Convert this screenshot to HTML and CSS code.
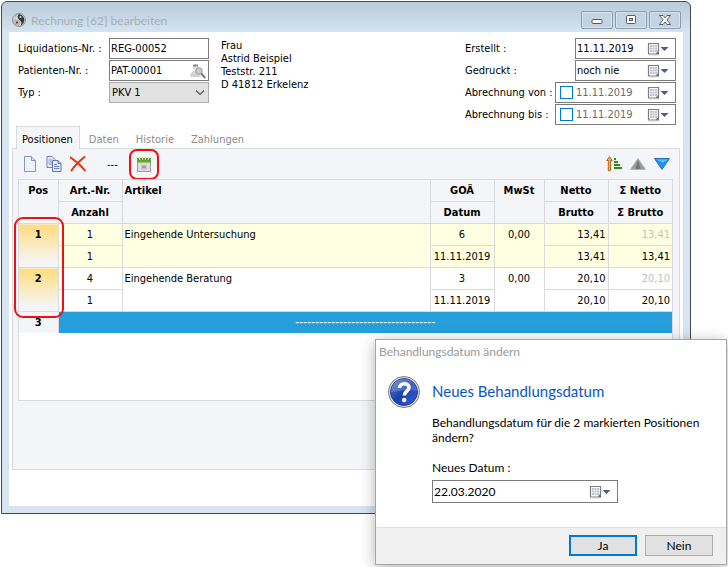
FILE: index.html
```html
<!DOCTYPE html>
<html lang="de">
<head>
    <meta charset="UTF-8">
    <meta name="viewport" content="width=device-width, initial-scale=1.0">
    <title>Rechnung bearbeiten</title>
    <link rel="stylesheet" href="styles.css">
</head>
<body>

<!-- Symbole, die mehrfach vorkommen -->
<svg width="0" height="0" class="symbols">
    <symbol id="picker" viewBox="0 0 22 14">
        <path d="M1.500 1.500h10v8l-2.500 2.500H1.500z" fill="#fbfafa" stroke="#857a7c" stroke-width="1.200"/>
        <path d="M3 3h7v7H3z" fill="#b4bfcd"/>
        <path d="M3 5.300h7M3 7.700h7M5.300 3v7M7.700 3v7" stroke="#eef1f6" stroke-width=".8"/>
        <path d="M12 9.500v3H9z" fill="#6f6769"/>
        <path d="M2 13h9" stroke="#cfc8c8" stroke-width=".8"/>
        <path d="M13.500 5h8l-4 4z" fill="#44608f"/>
    </symbol>
</svg>

<main class="window">
    <header class="titlebar">
        <svg class="logo" width="14" height="14" viewBox="0 0 14 14">
            <circle cx="7" cy="7" r="6.500" fill="#d8d8d8" stroke="#8a8f94"/>
            <path d="M5 1a6.200 6.200 0 0 1 3 12c2-2 2-4 0-5.500S4.500 3.500 7 1z" fill="#3a3a3a"/>
            <path d="M6 1a3 3 0 0 0 0 6c3 1 3 4 1 6A6 6 0 0 1 1 8" fill="#999" opacity=".5"/>
            <circle cx="8.500" cy="4" r="1" fill="#ddd"/>
            <circle cx="5" cy="9.500" r="1" fill="#333"/>
        </svg>
        <h1>Rechnung [62] bearbeiten</h1>
        <button class="winbtn" aria-label="Minimieren">
            <svg width="12" height="10" viewBox="0 0 12 10"><rect x="1" y="4.500" width="10" height="4" rx="1" fill="#fff" stroke="#555b63"/></svg>
        </button>
        <button class="winbtn" aria-label="Maximieren">
            <svg width="12" height="10" viewBox="0 0 12 10"><rect x="1.500" y=".5" width="9" height="8" rx="1" fill="#fff" stroke="#555b63"/><rect x="4.500" y="3.500" width="3" height="2" fill="#c4d2e0" stroke="#555b63"/></svg>
        </button>
        <button class="winbtn" aria-label="Schließen">
            <svg width="12" height="10" viewBox="0 0 12 10"><path d="M.5.5h3.500l2 2.300 2-2.300h3.500L8 4.800l3.500 4.700H8L6 7 4 9.500H.5L4 4.800z" fill="#fff" stroke="#555b63"/></svg>
        </button>
    </header>

    <div class="content">
        <form class="head">
            <div class="fields">
                <label for="liqNr">Liquidations-Nr. :</label>
                <div class="box"><input type="text" id="liqNr" value="REG-00052"></div>
                <label for="patNr">Patienten-Nr. :</label>
                <div class="box">
                    <input type="text" id="patNr" value="PAT-00001">
                    <button type="button" class="plain" aria-label="Patient suchen">
                        <svg width="17" height="16" viewBox="0 0 17 16">
                            <path d="M1 14c0-4 2-5 4-6h4l3 6z" fill="#d2d2d2"/>
                            <circle cx="6.500" cy="4.500" r="3" fill="#dedede"/>
                            <path d="M4 1.500h5v2H4z" fill="#8c8c8c"/>
                            <circle cx="10" cy="8" r="3.200" fill="#ccc" stroke="#999"/>
                            <path d="M12.200 10.500l4 4.500" stroke="#777" stroke-width="2"/>
                        </svg>
                    </button>
                </div>
                <label for="typ">Typ :</label>
                <div class="combo">
                    <select id="typ"><option>PKV 1</option></select>
                    <svg width="10" height="6" viewBox="0 0 10 6"><path d="M1 .5l4 4 4-4" fill="none" stroke="#555" stroke-width="1.200"/></svg>
                </div>
            </div>

            <address>Frau<br>Astrid Beispiel<br>Teststr. 211<br>D 41812 Erkelenz</address>

            <div class="dates">
                <label for="erstellt">Erstellt :</label>
                <div class="box">
                    <input type="text" id="erstellt" value="11.11.2019">
                    <button type="button" class="plain" aria-label="Kalender"><svg width="22" height="14"><use href="#picker"/></svg></button>
                </div>
                <label for="gedruckt">Gedruckt :</label>
                <div class="box">
                    <input type="text" id="gedruckt" value="noch nie">
                    <button type="button" class="plain" aria-label="Kalender"><svg width="22" height="14"><use href="#picker"/></svg></button>
                </div>
                <label for="von">Abrechnung von :</label>
                <div class="box wide">
                    <input type="checkbox" aria-label="Abrechnung von aktiv">
                    <input type="text" class="off" id="von" value="11.11.2019">
                    <button type="button" class="plain" aria-label="Kalender"><svg width="22" height="14"><use href="#picker"/></svg></button>
                </div>
                <label for="bis">Abrechnung bis :</label>
                <div class="box wide">
                    <input type="checkbox" aria-label="Abrechnung bis aktiv">
                    <input type="text" class="off" id="bis" value="11.11.2019">
                    <button type="button" class="plain" aria-label="Kalender"><svg width="22" height="14"><use href="#picker"/></svg></button>
                </div>
            </div>
        </form>

        <nav class="tabs">
            <a href="#positionen" class="active">Positionen</a>
            <a href="#daten">Daten</a>
            <a href="#historie">Historie</a>
            <a href="#zahlungen">Zahlungen</a>
        </nav>

        <section class="panel" id="positionen">
            <div class="toolbar">
                <button class="tool" aria-label="Neu">
                    <svg width="16" height="16" viewBox="0 0 16 16"><path d="M2.500.5h7l4 4v11h-11z" fill="#eef3fc" stroke="#8295c0"/><path d="M9.500.5v4h4" fill="#cfdcf3" stroke="#8295c0"/></svg>
                </button>
                <button class="tool" aria-label="Kopieren">
                    <svg width="16" height="16" viewBox="0 0 16 16"><path d="M1 .5h5l3 3v8H1z" fill="#e6edfa" stroke="#6f84b8"/><path d="M2.500 4h4M2.500 6h4M2.500 8h4" stroke="#7f94c6"/><path d="M6.500 4.500h5.500l3 3v8H6.500z" fill="#e6edfa" stroke="#5f75ad"/><path d="M12 4.500v3h3" fill="none" stroke="#5f75ad"/><path d="M8 8.500h3M8 10.500h5.500M8 12.500h5.500" stroke="#6f88c4"/></svg>
                </button>
                <button class="tool" aria-label="Löschen">
                    <svg width="16" height="16" viewBox="0 0 16 16"><path d="M.5 1.500C5 4.500 11 9.500 15 14.500M14.500 1C9.500 5 4.500 10 1.500 14.500" fill="none" stroke="#e5330c" stroke-width="2" stroke-linecap="round"/></svg>
                </button>
                <button class="tool dashes">---</button>
                <button class="tool marked" aria-label="Behandlungsdatum ändern">
                    <svg width="14" height="15" viewBox="0 0 14 15"><path d="M.5 4h13v10.500H.5z" fill="#d9d9d9" stroke="#a0a0a0"/><path d="M0 1h14v4.500H0z" fill="#5fa82e"/><path d="M2.500 0v3M5.500 0v3M8.500 0v3M11.500 0v3" stroke="#c2e09c"/><path d="M2 7.500h10v5H2z" fill="#f4f4f4"/><path d="M2 9h10M2 11h10M4.500 7v6M7 7v6M9.500 7v6" stroke="#c4c0c0" stroke-width=".8"/><path d="M5 8.500h4v3H5z" fill="#a79c9c"/></svg>
                </button>
                <span class="spacer"></span>
                <button class="tool" aria-label="Sortieren">
                    <svg width="16" height="16" viewBox="0 0 16 16"><path d="M3.500.7L6.300 4.500H4.700v10H2.300v-10H.7z" fill="#f5b25c" stroke="#b5651a"/><path d="M8 3h2M8 6h4M8 9h6M8 12h8" stroke="#2f8a1e" stroke-width="2"/></svg>
                </button>
                <button class="tool" aria-label="Nach oben">
                    <svg width="16" height="16" viewBox="0 0 16 16"><path d="M8 2.500l7.500 11H.5z" fill="#9a9a9a" stroke="#b5b5b5"/><path d="M8 4l2.500 9h-5z" fill="#747474"/></svg>
                </button>
                <button class="tool" aria-label="Nach unten">
                    <svg width="16" height="16" viewBox="0 0 16 16"><path d="M.5 2.500h15L8 13.500z" fill="#1d94f3" stroke="#2d6fb7"/><path d="M2 3.500h12l-5 3z" fill="#62bdff"/></svg>
                </button>
            </div>

            <div class="grid">
                <table>
                    <colgroup>
                        <col class="c-pos"><col class="c-mid"><col><col class="c-mid"><col class="c-tax"><col class="c-mid"><col class="c-mid">
                    </colgroup>
                    <thead>
                        <tr><th rowspan="2">Pos</th><th>Art.-Nr.</th><th rowspan="2" class="left">Artikel</th><th>GOÄ</th><th rowspan="2">MwSt</th><th>Netto</th><th>Σ Netto</th></tr>
                        <tr><th>Anzahl</th><th>Datum</th><th>Brutto</th><th>Σ Brutto</th></tr>
                    </thead>
                    <tbody class="yellow">
                        <tr><th rowspan="2" class="sel">1</th><td>1</td><td rowspan="2" class="left">Eingehende Untersuchung</td><td>6</td><td rowspan="2">0,00</td><td class="num">13,41</td><td class="num dim">13,41</td></tr>
                        <tr><td>1</td><td>11.11.2019</td><td class="num">13,41</td><td class="num">13,41</td></tr>
                    </tbody>
                    <tbody>
                        <tr><th rowspan="2" class="sel">2</th><td>4</td><td rowspan="2" class="left">Eingehende Beratung</td><td>3</td><td rowspan="2">0,00</td><td class="num">20,10</td><td class="num dim">20,10</td></tr>
                        <tr><td>1</td><td>11.11.2019</td><td class="num">20,10</td><td class="num">20,10</td></tr>
                    </tbody>
                    <tbody>
                        <tr><th>3</th><td colspan="6" class="current">-----------------------------------</td></tr>
                    </tbody>
                </table>
                <span class="ring"></span>
            </div>
        </section>
    </div>
</main>

<div class="dialog" role="dialog" aria-labelledby="dlgTitle">
    <div class="dialog-title" id="dlgTitle">Behandlungsdatum ändern</div>
    <div class="dialog-body">
        <svg width="34" height="34" viewBox="0 0 34 34">
            <defs>
                <linearGradient id="blue" x1="0" y1="0" x2="1" y2="1">
                    <stop offset="0" stop-color="#5b86dc"/>
                    <stop offset=".5" stop-color="#1b3fae"/>
                    <stop offset="1" stop-color="#3b5fe0"/>
                </linearGradient>
            </defs>
            <circle cx="17" cy="17" r="15.500" fill="#e8e8e8" stroke="#777"/>
            <circle cx="17" cy="17" r="13.500" fill="url(#blue)" stroke="#1c3a8c"/>
            <path d="M4 17a13 13 0 0 1 26-1c-8-2-18 0-26 1z" fill="#fff" opacity=".18"/>
            <path d="M12.500 13c0-5.500 9.500-5.500 9.500-.5 0 4-4.700 3.500-4.700 8" fill="none" stroke="#fff" stroke-width="3.600"/>
            <circle cx="17.200" cy="25" r="2.300" fill="#eee"/>
        </svg>
        <div class="dialog-text">
            <h2>Neues Behandlungsdatum</h2>
            <p>Behandlungsdatum für die 2 markierten Positionen ändern?</p>
            <label for="neuesDatum">Neues Datum :</label>
            <div class="box">
                <input type="text" id="neuesDatum" value="22.03.2020">
                <button type="button" class="plain" aria-label="Kalender"><svg width="22" height="14"><use href="#picker"/></svg></button>
            </div>
        </div>
    </div>
    <div class="dialog-buttons">
        <button class="primary">Ja</button>
        <button>Nein</button>
    </div>
</div>

</body>
</html>
```
FILE: styles.css
```css
* {
    box-sizing: border-box;
}
body {
    margin: 0;
    background: white;
    color: black;
    font-family: "DejaVu Sans Condensed", "DejaVu Sans", sans-serif;
    font-size: 11px;
}
input, select, button {
    font: inherit;
    color: inherit;
}
svg {
    display: block;
    flex: none;
}
.symbols {
    position: absolute;
}

/* Fenster */
.window {
    margin: 1px 37px 0 1px;
    padding: 0 7px 7px;
    border: 1px solid #45484c;
    border-radius: 6px 6px 0 0;
    background: linear-gradient(#b9cad9, #d7e4f1 31px);
}
.titlebar {
    display: flex;
    align-items: center;
    gap: 5px;
    height: 30px;
    padding: 6px 2px 0 3px;
}
.titlebar h1 {
    flex: 1;
    margin: 0;
    color: #a6b0b9;
    font: 12px Lato, sans-serif;
}
.winbtn {
    display: flex;
    align-items: center;
    justify-content: center;
    width: 32px;
    height: 18px;
    padding: 0;
    border: 1px solid #8d9bab;
    border-radius: 2px;
    background: #c3d3e2;
    box-shadow: inset 0 0 0 1px #d5e1ec;
}
.winbtn + .winbtn {
    margin-left: -3px;
}
.content {
    padding: 6px 3px 36px;
    background: white;
}

/* Kopfdaten */
.head {
    display: flex;
    align-items: flex-start;
    padding: 0 4px 0 6px;
}
.fields, .dates {
    display: grid;
    align-items: center;
    row-gap: 1px;
}
.fields {
    grid-template-columns: 91px 100px;
}
.dates {
    grid-template-columns: 90px 121px;
    margin-left: auto;
}
.dates .box {
    justify-self: end;
    width: 101px;
}
.dates .wide {
    width: 121px;
}
address {
    margin: 1px 0 0 12px;
    font-style: normal;
    line-height: 13px;
}
.box {
    display: flex;
    align-items: center;
    height: 21px;
    border: 1px solid #7a7a7a;
    background: white;
}
.box input[type="text"] {
    flex: 1;
    min-width: 0;
    padding: 0 0 0 1px;
    border: none;
    background: none;
    outline: none;
}
.box .off {
    color: #6d6d6d;
}
.box input[type="checkbox"] {
    appearance: none;
    width: 13px;
    height: 13px;
    margin: 0 2px 0 4px;
    border: 1px solid #0078d7;
    background: white;
}
.plain {
    padding: 0;
    margin-right: 6px;
    border: none;
    background: none;
}
.fields .plain {
    margin-right: 2px;
}
.combo {
    display: grid;
    align-items: center;
}
.combo select, .combo svg {
    grid-area: 1 / 1;
}
.combo select {
    appearance: none;
    height: 21px;
    padding: 0 2px;
    border: 1px solid #adadad;
    border-radius: 0;
    background: #e1e1e1;
}
.combo svg {
    justify-self: end;
    margin-right: 4px;
    pointer-events: none;
}

/* Reiter */
.tabs {
    display: flex;
    gap: 1px;
    margin-top: 1px;
    padding-left: 4px;
}
.tabs a {
    height: 22px;
    padding: 0 8px;
    color: #8c8c8c;
    line-height: 27px;
    text-decoration: none;
}
.tabs .active {
    position: relative;
    height: 23px;
    margin-bottom: -1px;
    padding: 0 6px 0 5px;
    border: 1px solid #d9dade;
    border-bottom: none;
    background: #f4f5f8;
    color: black;
    line-height: 25px;
}
.panel {
    padding: 0 5px 68px;
    border: 1px solid #d9dade;
    background: #f4f5f8;
}
.toolbar {
    display: flex;
    align-items: center;
    gap: 8px;
    height: 30px;
    padding: 0 4px;
}
.tool {
    display: flex;
    align-items: center;
    justify-content: center;
    padding: 0;
    border: none;
    background: none;
}
.dashes {
    margin-left: 13px;
}
.marked {
    width: 30px;
    height: 31px;
    margin-left: 3px;
    border: 2px solid #ee1111;
    border-radius: 8px;
}
.spacer {
    flex: 1;
}

/* Positionen */
.grid {
    position: relative;
    height: 222px;
    margin-right: 1px;
    border: 1px solid #d9dade;
    background: white;
}
table {
    width: 100%;
    border-collapse: collapse;
    border-style: hidden;
    table-layout: fixed;
}
.c-pos {
    width: 39px;
}
.c-mid {
    width: 64px;
}
.c-tax {
    width: 50px;
}
th, td {
    padding: 3px 2px;
    border: 1px solid #d9dade;
    line-height: 15px;
    text-align: center;
    vertical-align: top;
}
th {
    background: #f4f5f8;
}
.yellow td {
    background: #ffffe1;
}
.left {
    text-align: left;
}
.num {
    text-align: right;
}
.dim {
    color: #c3c3c3;
}
.sel {
    background: linear-gradient(#ffdc7c, #f4f5f8 90%);
}
.current {
    background: #259fdb;
    color: white;
    font-family: "Liberation Sans", Arial, sans-serif;
    font-size: 12px;
}
.ring {
    position: absolute;
    top: 37px;
    left: -5px;
    width: 50px;
    height: 101px;
    border: 2px solid #ee1111;
    border-radius: 9px;
}

/* Dialog */
.dialog {
    position: absolute;
    top: 339px;
    right: 1px;
    width: 352px;
    border: 1px solid #a5a5a5;
    background: white;
    box-shadow: 0 3px 14px rgba(0, 0, 0, 0.3);
    font-family: Lato, sans-serif;
    font-size: 12px;
}
.dialog-title {
    padding: 3px;
    color: #999;
    line-height: 18px;
}
.dialog-body {
    display: flex;
    gap: 11px;
    padding: 11px 12px 24px 11px;
}
.dialog-text {
    flex: 1;
}
.dialog h2 {
    margin: 6px 0 14px;
    color: #0a55c4;
    font-size: 15px;
    font-weight: normal;
    line-height: 20px;
}
.dialog p {
    margin: 0 0 15px;
    line-height: 15px;
}
.dialog label {
    display: block;
    line-height: 15px;
}
.dialog .box {
    width: 186px;
    height: 23px;
    margin-top: 5px;
}
.dialog-buttons {
    display: flex;
    justify-content: flex-end;
    gap: 8px;
    padding: 7px 13px 8px;
    border-top: 1px solid #dfdfdf;
    background: #f0f0f0;
}
.dialog-buttons button {
    width: 68px;
    height: 21px;
    padding: 0;
    border: 1px solid #adadad;
    background: #e1e1e1;
    line-height: 17px;
}
.dialog-buttons .primary {
    border: 2px solid #0078d7;
}
```
